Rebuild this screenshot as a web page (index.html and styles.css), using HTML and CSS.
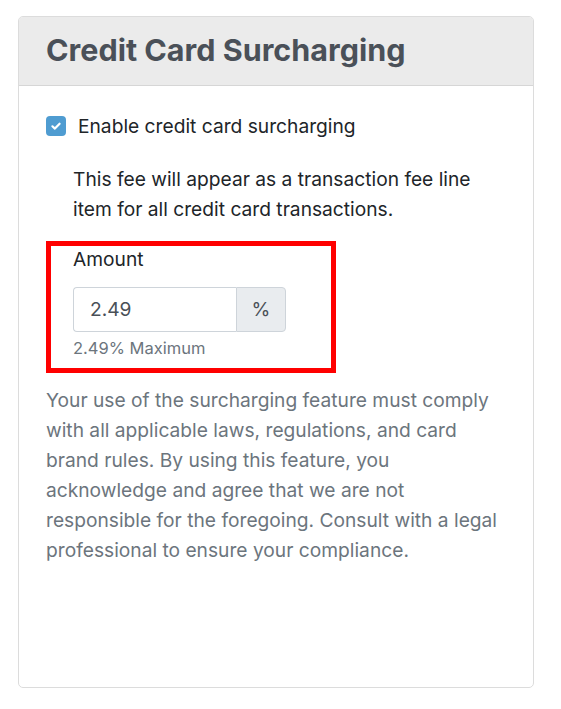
FILE: index.html
```html
<!DOCTYPE html>
<html lang="en">
<head>
<meta charset="utf-8">
<title>Credit Card Surcharging</title>
<link rel="stylesheet" href="styles.css">
</head>
<body>
<div class="page">
  <section class="card">
    <header class="card-header">
      <h2 class="card-title">Credit Card Surcharging</h2>
    </header>
    <div class="card-body">
      <label class="check">
        <span class="check-box">
          <svg width="12" height="12" viewBox="0 0 12 12"><path d="M2.4 6.3 L4.9 8.6 L9.6 3.7" fill="none" stroke="#fff" stroke-width="2.2" stroke-linecap="round" stroke-linejoin="round"/></svg>
        </span>
        <span class="check-label">Enable credit card surcharging</span>
      </label>
      <p class="fee-note">This fee will appear as a transaction fee line item for all credit card transactions.</p>
      <div class="highlight">
        <div class="field">
          <label class="field-label">Amount</label>
          <div class="input-group">
            <input class="input" type="text" value="2.49">
            <span class="addon">%</span>
          </div>
          <small class="help">2.49% Maximum</small>
        </div>
      </div>
      <p class="disclaimer">Your use of the surcharging feature must comply with all applicable laws, regulations, and card brand rules. By using this feature, you acknowledge and agree that we are not responsible for the foregoing. Consult with a legal professional to ensure your compliance.</p>
    </div>
  </section>
</div>
</body>
</html>
```
FILE: styles.css
```css
* { box-sizing: border-box; }
html, body { margin: 0; padding: 0; background: #fff; }
body {
  font-family: Inter, "Liberation Sans", Arial, sans-serif;
  font-size: 19.2px;
  color: #212529;
}
.page {
  padding: 16px 27px 0 18px;
}
.card {
  height: 672px;
  border: 1px solid #dcdcdc;
  border-radius: 5px;
  overflow: hidden;
  display: flex;
  flex-direction: column;
}
.card-header {
  background: #ebebeb;
  border-bottom: 1px solid #d6d6d6;
  padding: 13.5px 27px 17.5px;
}
.card-title {
  margin: 0;
  font-size: 30.5px;
  line-height: 37px;
  font-weight: 700;
  color: #4a5058;
}
.card-body {
  padding: 24.5px 27px 0;
}
.check {
  display: flex;
  align-items: center;
  gap: 12px;
  line-height: 30px;
}
.check-box {
  width: 20px;
  height: 20px;
  border-radius: 4px;
  background: #4f9cd1;
  display: flex;
  align-items: center;
  justify-content: center;
}
.check-label { color: #212529; }
.fee-note {
  margin: 23px 0 0 27px;
  line-height: 30px;
  color: #212529;
}
.highlight {
  margin-top: 17px;
  width: 290px;
  border: 5px solid #ff0000;
  padding: 0 0 9px 22px;
}
.field { display: flex; flex-direction: column; align-items: flex-start; }
.field-label {
  line-height: 27px;
  color: #212529;
}
.input-group {
  margin-top: 14px;
  display: flex;
  width: 213px;
  height: 45px;
}
.input {
  flex: 1;
  min-width: 0;
  height: 45px;
  border: 1px solid #ced4da;
  border-right: none;
  border-radius: 4px 0 0 4px;
  padding: 0 16px;
  font: inherit;
  font-size: 19.2px;
  color: #495057;
  background: #fff;
}
.addon {
  width: 50px;
  display: flex;
  align-items: center;
  justify-content: center;
  background: #e9ecef;
  border: 1px solid #ced4da;
  border-radius: 0 4px 4px 0;
  color: #495057;
  font-size: 19.2px;
}
.help {
  margin-top: 5px;
  font-size: 16.5px;
  line-height: 22px;
  color: #6c757d;
}
.disclaimer {
  margin: 12px 0 0;
  line-height: 30px;
  color: #6c757d;
}
```
